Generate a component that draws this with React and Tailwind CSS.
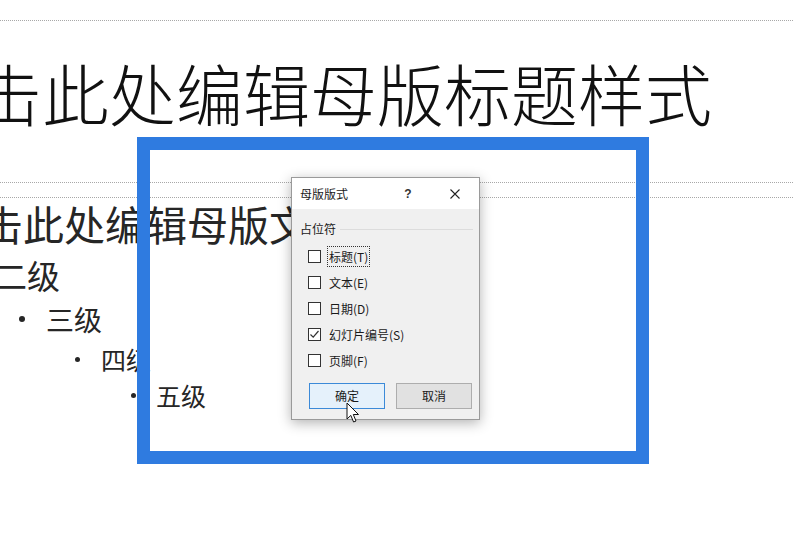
import React from "react";

const CJK = { fontFamily: '"Noto Sans CJK SC", "Noto Sans", sans-serif' };

function Checkbox({ checked }) {
  return (
    <span className="w-[13px] h-[13px] border border-[#333333] bg-white flex items-center justify-center shrink-0">
      {checked && (
        <svg width="11" height="11" viewBox="0 0 11 11">
          <polyline points="1.5,5.5 4.2,8.2 9.5,2" fill="none" stroke="#333" strokeWidth="1.2" />
        </svg>
      )}
    </span>
  );
}

function Row({ label, checked, focus }) {
  return (
    <div className="h-[26px] flex items-center pl-[16px]">
      <Checkbox checked={checked} />
      <span
        className={
          "ml-[6px] px-[1px] leading-[19px] text-[12px] text-[#1a1a1a] " +
          (focus ? "border border-dotted border-[#333]" : "border border-transparent")
        }
      >
        {label}
      </span>
    </div>
  );
}

export default function App() {
  return (
    <div className="relative w-[793px] h-[545px] overflow-hidden bg-white" style={CJK}>
      {/* slide content */}
      <div className="pt-[20px]">
        <div className="h-[163px] border-t border-b border-dotted border-[#a8a8a8]">
          <div className="mt-[37px] ml-[-92px] whitespace-nowrap text-[67px] leading-none font-light text-[#111]">
            单击此处编辑母版标题样式
          </div>
        </div>
        <div className="h-[14px]" />
        <div className="border-t border-dotted border-[#a8a8a8] text-[#262626]">
          <div className="mt-[5px] ml-[-59px] whitespace-nowrap text-[41px] leading-none">
            单击此处编辑母版文本样式
          </div>
          <div className="mt-[15px] ml-[-6px] whitespace-nowrap text-[33px] leading-none">二级</div>
          <div className="mt-[13px] flex items-center">
            <span className="ml-[19px] w-[6px] h-[6px] rounded-full bg-[#262626]" />
            <span className="ml-[21px] text-[28px] leading-none">三级</span>
          </div>
          <div className="mt-[14px] flex items-center">
            <span className="ml-[75px] w-[5px] h-[5px] rounded-full bg-[#262626]" />
            <span className="ml-[21px] text-[25px] leading-none">四级</span>
          </div>
          <div className="mt-[11px] flex items-center">
            <span className="ml-[131px] w-[5px] h-[5px] rounded-full bg-[#262626]" />
            <span className="ml-[20px] text-[25px] leading-none">五级</span>
          </div>
        </div>
      </div>

      {/* dialog */}
      <div className="absolute left-[291px] top-[177px] w-[189px] h-[243px] border border-[#9a9a9a] bg-[#f0f0f0] shadow-[0_3px_12px_rgba(0,0,0,0.3)] flex flex-col">
        <div className="h-[31px] bg-white flex items-center text-[12px] text-[#1a1a1a]">
          <span className="ml-[8px]">母版版式</span>
          <span className="ml-auto w-[10px] text-center font-bold text-[#333]" style={{ fontFamily: '"Liberation Sans", sans-serif' }}>?</span>
          <span className="ml-[37px] mr-[19px] w-[10px] h-[10px] flex">
            <svg width="10" height="10" viewBox="0 0 10 10">
              <path d="M0.5 0.5 L9.5 9.5 M9.5 0.5 L0.5 9.5" stroke="#222" strokeWidth="1.1" />
            </svg>
          </span>
        </div>
        <div className="mt-[12px] flex items-center pl-[8px] pr-[6px] text-[12px] leading-[16px] text-[#1a1a1a]">
          <span>占位符</span>
          <span className="ml-[4px] flex-1 h-px bg-[#dcdcdc]" />
        </div>
        <div className="mt-[6px]">
          <Row label="标题(T)" focus />
          <Row label="文本(E)" />
          <Row label="日期(D)" />
          <Row label="幻灯片编号(S)" checked />
          <Row label="页脚(F)" />
        </div>
        <div className="mt-[10px] flex pl-[17px] gap-[11px] text-[12px] text-[#1a1a1a]">
          <div className="w-[76px] h-[26px] border border-[#3c8ad8] bg-[#e5f1fb] flex items-center justify-center">确定</div>
          <div className="w-[76px] h-[26px] border border-[#adadad] bg-[#e1e1e1] flex items-center justify-center">取消</div>
        </div>
      </div>

      {/* blue highlight frame */}
      <div className="absolute left-[137px] top-[137px] w-[512px] h-[327px] border-[13px] border-[#2f7be0]" />

      {/* mouse cursor */}
      <svg className="absolute left-[346px] top-[402px]" width="14" height="22" viewBox="0 0 14 22">
        <path d="M1 1 L1 17 L4.8 13.4 L7.6 20 L10 19 L7.3 12.5 L12.5 12.5 Z" fill="white" stroke="#111" strokeWidth="1" strokeLinejoin="round" />
      </svg>
    </div>
  );
}
